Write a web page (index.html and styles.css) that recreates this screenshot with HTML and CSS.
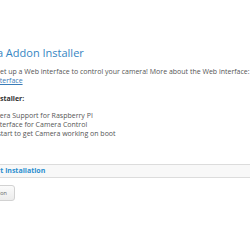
FILE: index.html
```html
<!DOCTYPE html>
<html>
<head>
<meta charset="utf-8">
<link rel="stylesheet" href="styles.css">
</head>
<body>
<div class="page">
  <h1 class="title">Camera Addon Installer</h1>
  <div class="intro">
    <p class="intro-text">This will set up a Web interface to control your camera! More about the Web interface:</p>
    <a class="link" href="#">Web Interface</a>
  </div>
  <h3 class="sub">Installer:</h3>
  <ul class="features">
    <li class="f1">Camera Support for Raspberry PI</li>
    <li class="f2">Web Interface for Camera Control</li>
    <li class="f3">Autostart to get Camera working on boot</li>
  </ul>
</div>
<div class="bar"><span class="bar-title">Start installation</span></div>
<div class="actions"><button class="btn">Start installation</button></div>
</body>
</html>
```
FILE: styles.css
```css
html, body { margin: 0; padding: 0; background: #fff; overflow: hidden; }
body { font-family: "Open Sans", "DejaVu Sans", sans-serif; color: #555; font-size: 7px; line-height: 9px; width: 250px; height: 250px; }
.page { padding-top: 46px; }
.title { font-size: 11px; line-height: 13px; font-weight: 400; color: #3585c2; margin: 0 0 8px -37px; white-space: nowrap; }
.intro { display: flex; flex-direction: column; align-items: flex-start; }
.intro-text { margin: 0 0 0 -31px; white-space: nowrap; }
.link { display: block; margin-left: -23px; color: #3a7cb8; text-decoration: underline; white-space: nowrap; }
.sub { font-size: 7px; line-height: 9px; font-weight: 700; margin: 9px 0 8px -7px; color: #333; }
.features { list-style: none; margin: 0; padding: 0; white-space: nowrap; }
.f1 { margin-left: -15px; }
.f2 { margin-left: -23px; }
.f3 { margin-left: -18px; }
.bar { margin-top: 26px; background: #f8f8f8; border-top: 1px solid #dcdcdc; border-bottom: 1px solid #dcdcdc; height: 12px; line-height: 11px; white-space: nowrap; }
.bar-title { display: inline-block; font-weight: 700; color: #2b8fd0; font-size: 7px; margin-left: -14px; }
.actions { margin-top: 7px; white-space: nowrap; }
.btn { font-family: "Open Sans", sans-serif; font-size: 5.5px; color: #666; background: linear-gradient(#fbfbfb, #ececec); border: 1px solid #d2d2d2; border-radius: 3px; height: 16px; padding: 0 7px; margin-left: -43px; }
```
